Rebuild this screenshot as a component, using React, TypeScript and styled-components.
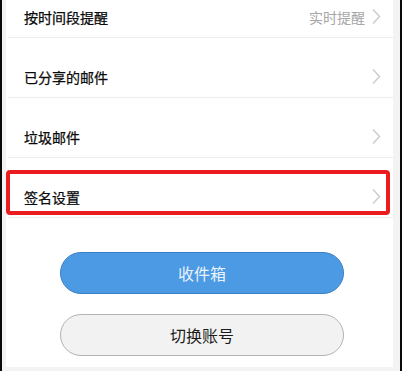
import React from "react";
import styled, { createGlobalStyle } from "styled-components";

const Global = createGlobalStyle`
  html, body { margin: 0; padding: 0; }
  body { font-family: "Noto Sans CJK SC", "Noto Sans", sans-serif; }
`;

const Frame = styled.div`
  width: 402px;
  height: 371px;
  box-sizing: border-box;
  border-left: 2px solid #0a0a0a;
  border-right: 2px solid #0a0a0a;
  background: #f3f3f3;
  padding: 0 7px 4px 4px;
  overflow: hidden;
  display: flex;
  flex-direction: column;
`;

const Panel = styled.div`
  flex: 1;
  background: #ffffff;
  display: flex;
  flex-direction: column;
  overflow: hidden;
`;

const List = styled.div`
  margin-top: -22px;
  display: flex;
  flex-direction: column;
`;

const Row = styled.div`
  position: relative;
  height: 60px;
  box-sizing: border-box;
  padding: 29px 12px 11px 16px;
  margin-left: 2px;
  border-bottom: 1.5px solid #ececec;
  display: flex;
  align-items: center;
  justify-content: space-between;
`;

const Label = styled.span`
  font-size: 14px;
  line-height: 20px;
  color: #0a0a0a;
  -webkit-text-stroke: 0.25px #0a0a0a;
`;

const Right = styled.div`
  display: flex;
  align-items: center;
  gap: 7px;
`;

const Value = styled.span`
  font-size: 14px;
  line-height: 20px;
  color: #a6a6a6;
`;

const Highlight = styled.div`
  position: absolute;
  left: -2px;
  right: 3px;
  top: 12px;
  bottom: 2px;
  border: 4px solid #ea1c1f;
  border-radius: 4px;
  pointer-events: none;
`;

const Buttons = styled.div`
  display: flex;
  flex-direction: column;
  gap: 20px;
  padding: 34px 0 0 54px;
`;

const Pill = styled.button<{ $primary?: boolean }>`
  width: 284px;
  height: 42px;
  border-radius: 21px;
  box-sizing: border-box;
  font-family: "Noto Sans CJK SC", "Noto Sans", sans-serif;
  font-size: 16px;
  padding: 0;
  border: 1px solid ${(p) => (p.$primary ? "#3d7fc4" : "#b3b3b3")};
  background: ${(p) => (p.$primary ? "#4c9ae3" : "#f2f2f2")};
  color: ${(p) => (p.$primary ? "#eaf3fc" : "#1c1c1c")};
`;

const Chevron = () => (
  <svg width="9" height="17" viewBox="0 0 9 17" fill="none">
    <path d="M1 1.5 L7.5 8.5 L1 15.5" stroke="#cdcdcd" strokeWidth="1.5" />
  </svg>
);

const rows = [
  { label: "按时间段提醒", value: "实时提醒" },
  { label: "已分享的邮件" },
  { label: "垃圾邮件" },
  { label: "签名设置", highlight: true },
];

export default function App() {
  return (
    <>
      <Global />
      <Frame>
        <Panel>
          <List>
            {rows.map((r) => (
              <Row key={r.label}>
                <Label>{r.label}</Label>
                <Right>
                  {r.value && <Value>{r.value}</Value>}
                  <Chevron />
                </Right>
                {r.highlight && <Highlight />}
              </Row>
            ))}
          </List>
          <Buttons>
            <Pill $primary>收件箱</Pill>
            <Pill>切换账号</Pill>
          </Buttons>
        </Panel>
      </Frame>
    </>
  );
}
